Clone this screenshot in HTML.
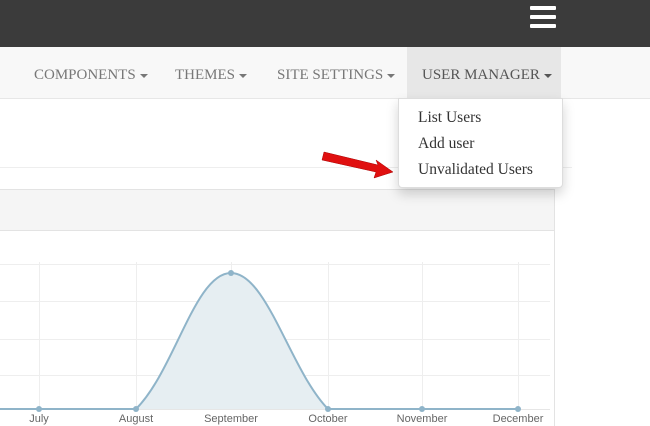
<!DOCTYPE html>
<html><head><style>
body{margin:0;width:650px;height:426px;overflow:hidden;background:#fff;font-family:"Liberation Serif",serif;position:relative}
.top{position:absolute;left:0;top:0;width:650px;height:47px;background:#3b3b3b}
.hb{position:absolute;left:530px;width:26px;height:4px;background:#fff;border-radius:1px}
.nav{position:absolute;left:0;top:47px;width:650px;height:51px;background:#f8f8f8;border-bottom:1px solid #e7e7e7}
.item{position:absolute;top:0;height:51px;line-height:56px;font-size:15px;color:#777;white-space:nowrap}
.caret{display:inline-block;width:0;height:0;border-left:4px solid transparent;border-right:4px solid transparent;border-top:4px solid #777;vertical-align:middle;margin-left:4px}
.dd{position:absolute;left:398px;top:98px;width:163px;height:88px;background:#fff;border:1px solid #ddd;border-radius:0 0 4px 4px;box-shadow:0 6px 12px rgba(0,0,0,.175)}
.dd div{position:absolute;left:19px;font-size:15.5px;color:#333}
.lbl{position:absolute;top:413px;font-family:"Liberation Sans",sans-serif;font-size:11px;color:#666;transform:translateX(-50%)}
</style></head><body>
<div class="top"><div class="hb" style="top:6px"></div><div class="hb" style="top:15px"></div><div class="hb" style="top:24px"></div></div>
<div class="nav">
<div class="item" style="left:34px">COMPONENTS<span class="caret"></span></div>
<div class="item" style="left:175px">THEMES<span class="caret"></span></div>
<div class="item" style="left:277px">SITE SETTINGS<span class="caret"></span></div>
<div class="item" style="left:407px;width:154px;background:#e7e7e7;padding-left:15px;box-sizing:border-box;color:#555">USER MANAGER<span class="caret" style="border-top-color:#555"></span></div>
</div>
<div style="position:absolute;left:0;top:167px;width:572px;height:1px;background:#eee"></div>
<div style="position:absolute;left:0;top:189px;width:554px;height:40px;background:#f5f5f5;border:1px solid #e3e3e3;border-left:none"></div>
<div style="position:absolute;left:554px;top:229px;width:1px;height:197px;background:#e3e3e3"></div>
<svg style="position:absolute;left:0;top:0" width="650" height="426">
<g stroke="#eee" stroke-width="1">
<line x1="0" y1="264.5" x2="550" y2="264.5"/><line x1="0" y1="301.5" x2="550" y2="301.5"/><line x1="0" y1="339.5" x2="550" y2="339.5"/><line x1="0" y1="375.5" x2="550" y2="375.5"/>
<line x1="39.5" y1="262" x2="39.5" y2="410"/><line x1="136.5" y1="262" x2="136.5" y2="410"/><line x1="231.5" y1="262" x2="231.5" y2="410"/><line x1="328.5" y1="262" x2="328.5" y2="410"/><line x1="422.5" y1="262" x2="422.5" y2="410"/><line x1="518.5" y1="262" x2="518.5" y2="410"/>
</g>
<line x1="0" y1="409.5" x2="550" y2="409.5" stroke="#e6e6e6"/>
<path d="M136 409 C175 370,195 273,231 273 C267 273,290 370,328 409 Z" fill="#e6eef2"/>
<path d="M0 409 L136 409 C175 370,195 273,231 273 C267 273,290 370,328 409 L518 409" fill="none" stroke="#8fb4c9" stroke-width="2"/>
<g fill="#8fb4c9"><circle cx="39" cy="409" r="3"/><circle cx="136" cy="409" r="3"/><circle cx="231" cy="273" r="3"/><circle cx="328" cy="409" r="3"/><circle cx="422" cy="409" r="3"/><circle cx="518" cy="409" r="3"/></g>
<path d="M324 152 L378 165 L376 160 L393 172 L374 178 L376 172 L322 160 Z" fill="#e01010" stroke="#a00" stroke-width="0.5"/>
</svg>
<div class="lbl" style="left:39px">July</div><div class="lbl" style="left:136px">August</div><div class="lbl" style="left:231px">September</div><div class="lbl" style="left:328px">October</div><div class="lbl" style="left:422px">November</div><div class="lbl" style="left:518px">December</div>
<div class="dd"><div style="top:10px">List Users</div><div style="top:36px">Add user</div><div style="top:62px">Unvalidated Users</div></div>
</body></html>
